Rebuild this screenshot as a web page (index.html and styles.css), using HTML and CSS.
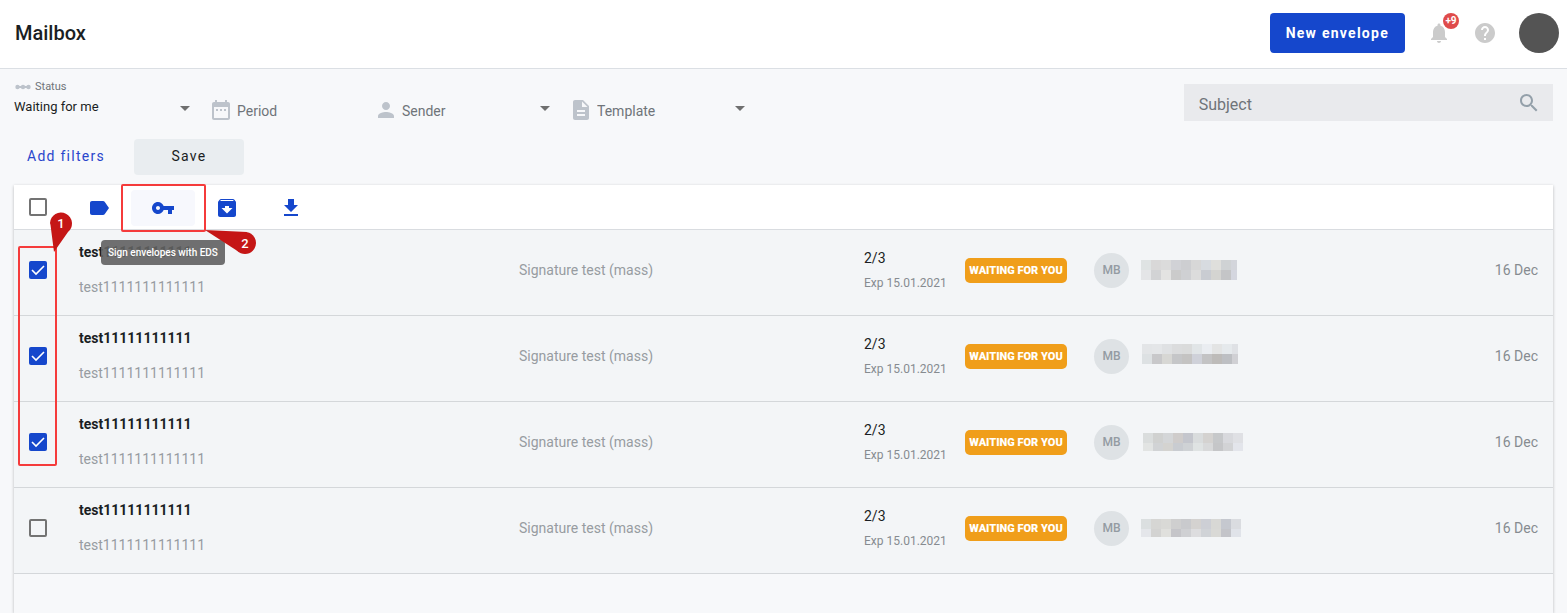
FILE: index.html
```html
<!DOCTYPE html>
<html lang="en">
<head>
<meta charset="utf-8">
<meta name="viewport" content="width=device-width, initial-scale=1">
<title>Mailbox</title>
<link rel="stylesheet" href="styles.css">
</head>
<body>
<header class="topbar">
  <h1 class="topbar-title">Mailbox</h1>
  <button class="btn btn-primary" type="button">New envelope</button>
  <button class="icon-btn" type="button" aria-label="Notifications">
    <svg class="icon" viewBox="0 0 24 24"><path d="M12 22c1.100 0 2-.9 2-2h-4c0 1.100.9 2 2 2zm6-6v-5c0-3.070-1.640-5.640-4.500-6.320V4c0-.83-.67-1.500-1.500-1.500s-1.500.67-1.500 1.500v.68C7.630 5.360 6 7.920 6 11v5l-2 2v1h16v-1l-2-2z"/></svg>
    <span class="count">+9</span>
  </button>
  <button class="icon-btn" type="button" aria-label="Help">
    <svg class="icon" viewBox="0 0 24 24"><path d="M12 2C6.480 2 2 6.480 2 12s4.480 10 10 10 10-4.480 10-10S17.520 2 12 2zm1 17h-2v-2h2v2zm2.070-7.750l-.9.920C13.450 12.900 13 13.500 13 15h-2v-.5c0-1.100.45-2.100 1.170-2.830l1.240-1.260c.37-.36.59-.86.59-1.410 0-1.100-.9-2-2-2s-2 .9-2 2H8c0-2.210 1.790-4 4-4s4 1.790 4 4c0 .88-.36 1.680-.93 2.250z"/></svg>
  </button>
  <button class="user" type="button" aria-label="Account"></button>
</header>

<main class="page">
  <form class="filters">
    <div class="field field-status">
      <label class="field-label" for="status">
        <svg class="steps" viewBox="0 0 16 6"><path d="M2 3h12" stroke="currentColor" stroke-width="2"/><circle cx="2.500" cy="3" r="2.200"/><circle cx="8" cy="3" r="2.200"/><circle cx="13.500" cy="3" r="2.200"/></svg>
        Status
      </label>
      <select class="control control-small" id="status"><option>Waiting for me</option></select>
      <svg class="caret" viewBox="0 0 24 24"><path d="M7 10l5 5 5-5z"/></svg>
    </div>
    <div class="field field-period">
      <svg class="icon" viewBox="0 0 24 24"><path d="M9 11H7v2h2v-2zm4 0h-2v2h2v-2zm4 0h-2v2h2v-2zm2-7h-1V2h-2v2H8V2H6v2H5c-1.110 0-1.990.9-1.990 2L3 20c0 1.100.89 2 2 2h14c1.100 0 2-.9 2-2V6c0-1.100-.9-2-2-2zm0 16H5V9h14v11z"/></svg>
      <input class="control" type="text" placeholder="Period" aria-label="Period">
    </div>
    <div class="field">
      <svg class="icon" viewBox="0 0 24 24"><path d="M12 12c2.210 0 4-1.790 4-4s-1.790-4-4-4-4 1.790-4 4 1.790 4 4 4zm0 2c-2.670 0-8 1.340-8 4v2h16v-2c0-2.660-5.330-4-8-4z"/></svg>
      <select class="control" aria-label="Sender"><option>Sender</option></select>
      <svg class="caret" viewBox="0 0 24 24"><path d="M7 10l5 5 5-5z"/></svg>
    </div>
    <div class="field">
      <svg class="icon" viewBox="0 0 24 24"><path d="M14 2H6c-1.100 0-1.990.9-1.990 2L4 20c0 1.100.89 2 1.990 2H18c1.100 0 2-.9 2-2V8l-6-6zm2 16H8v-2h8v2zm0-4H8v-2h8v2zm-3-5V3.500L18.500 9H13z"/></svg>
      <select class="control" aria-label="Template"><option>Template</option></select>
      <svg class="caret" viewBox="0 0 24 24"><path d="M7 10l5 5 5-5z"/></svg>
    </div>
    <div class="search">
      <input class="search-input" type="text" placeholder="Subject" aria-label="Subject">
      <svg class="icon" viewBox="0 0 24 24"><path d="M15.500 14h-.79l-.28-.27C15.410 12.590 16 11.110 16 9.500 16 5.910 13.090 3 9.500 3S3 5.910 3 9.500 5.910 16 9.500 16c1.610 0 3.090-.59 4.230-1.570l.27.28v.79l5 4.990L20.490 19l-4.990-5zm-6 0C7.010 14 5 11.990 5 9.500S7.010 5 9.500 5 14 7.010 14 9.500 11.990 14 9.500 14z"/></svg>
    </div>
  </form>

  <div class="filter-actions">
    <button class="btn btn-text" type="button">Add filters</button>
    <button class="btn btn-muted" type="button">Save</button>
  </div>

  <section class="card">
    <div class="toolbar">
      <input class="check" type="checkbox" aria-label="Select all">
      <div class="tools">
        <button class="tool" type="button" aria-label="Label"><svg class="icon" viewBox="0 0 24 24"><path d="M17.630 5.840C17.270 5.330 16.670 5 16 5L5 5.010C3.900 5.010 3 5.900 3 7v10c0 1.100.9 1.990 2 1.990L16 19c.67 0 1.270-.33 1.630-.84L22 12l-4.370-6.160z"/></svg></button>
        <button class="tool tool-active" type="button" aria-describedby="eds-tip" aria-label="Sign"><svg class="icon" viewBox="0 0 24 24"><path d="M12.650 10C11.830 7.670 9.610 6 7 6c-3.310 0-6 2.690-6 6s2.690 6 6 6c2.610 0 4.830-1.670 5.650-4H17v4h4v-4h2v-4H12.650zM7 14c-1.100 0-2-.9-2-2s.9-2 2-2 2 .9 2 2-.9 2-2 2z"/></svg></button>
        <button class="tool" type="button" aria-label="Archive"><svg class="icon" viewBox="0 0 24 24"><path d="M20.540 5.230l-1.390-1.680C18.880 3.210 18.470 3 18 3H6c-.47 0-.88.21-1.160.55L3.460 5.230C3.170 5.570 3 6.020 3 6.500V19c0 1.100.9 2 2 2h14c1.100 0 2-.9 2-2V6.500c0-.48-.17-.93-.46-1.270zM12 17.500L6.500 12H10v-2h4v2h3.500L12 17.500zM5.120 5l.81-1h12l.94 1H5.120z"/></svg></button>
        <button class="tool" type="button" aria-label="Download"><svg class="icon" viewBox="0 0 24 24"><path d="M19 9h-4V3H9v6H5l7 7 7-7zM5 18v2h14v-2H5z"/></svg></button>
      </div>
    </div>

    <table class="mail">
      <colgroup><col class="c-check"><col class="c-title"><col><col class="c-progress"><col class="c-state"><col class="c-sender"><col class="c-date"></colgroup>
      <tbody>
        <tr>
          <td class="cell-check"><input class="check" type="checkbox" checked aria-label="Select envelope 1"></td>
          <td><div class="title">test11111111111</div><div class="subtitle">test1111111111111</div></td>
          <td class="template">Signature test (mass)</td>
          <td><div class="progress">2/3</div><div class="expires">Exp 15.01.2021</div></td>
          <td><span class="state">WAITING FOR YOU</span></td>
          <td><div class="sender"><span class="initials">MB</span>
            <svg class="redacted" viewBox="0 0 102 24" shape-rendering="crispEdges"><path fill="#dfe3e3" d="M0 2h10v10H0z"/><path fill="#d9d8d8" d="M10 2h10v10H10z"/><path fill="#dbdbdb" d="M20 2h10v10H20z"/><path fill="#d1d2d6" d="M30 2h10v10H30z"/><path fill="#cdced1" d="M40 2h10v10H40z"/><path fill="#d7d7d7" d="M50 2h10v10H50z"/><path fill="#d7dbe0" d="M60 2h10v10H60z"/><path fill="#dfdfdc" d="M70 2h10v10H70z"/><path fill="#cfd2d4" d="M80 2h10v10H80z"/><path fill="#d3d5db" d="M90 2h6v10H90z"/><path fill="#e4e5e7" d="M0 12h10v10H0z"/><path fill="#d2d3d5" d="M10 12h10v10H10z"/><path fill="#e3e3e2" d="M20 12h10v10H20z"/><path fill="#cbcbcb" d="M30 12h10v10H30z"/><path fill="#cfd0d3" d="M40 12h10v10H40z"/><path fill="#dcdcdc" d="M50 12h10v10H50z"/><path fill="#c9ccd2" d="M60 12h10v10H60z"/><path fill="#d4d4d1" d="M70 12h10v10H70z"/><path fill="#c4c5c7" d="M80 12h10v10H80z"/><path fill="#d4d6df" d="M90 12h6v10H90z"/></svg></div></td>
          <td class="date">16 Dec</td>
        </tr>
        <tr>
          <td class="cell-check"><input class="check" type="checkbox" checked aria-label="Select envelope 2"></td>
          <td><div class="title">test11111111111</div><div class="subtitle">test1111111111111</div></td>
          <td class="template">Signature test (mass)</td>
          <td><div class="progress">2/3</div><div class="expires">Exp 15.01.2021</div></td>
          <td><span class="state">WAITING FOR YOU</span></td>
          <td><div class="sender"><span class="initials">MB</span>
            <svg class="redacted" viewBox="0 0 102 24" shape-rendering="crispEdges"><path fill="#e3e5e7" d="M1 0h10v10H1z"/><path fill="#e4e6e8" d="M11 0h10v10H11z"/><path fill="#dfe1e3" d="M21 0h10v10H21z"/><path fill="#dbdcdd" d="M31 0h10v10H31z"/><path fill="#dadbdb" d="M41 0h10v10H41z"/><path fill="#e1e5e7" d="M51 0h10v10H51z"/><path fill="#eaedf1" d="M61 0h10v10H61z"/><path fill="#e3e4e4" d="M71 0h10v10H71z"/><path fill="#e5e9ec" d="M81 0h10v10H81z"/><path fill="#dfe1e5" d="M91 0h6v10H91z"/><path fill="#dde1e3" d="M1 10h10v10H1z"/><path fill="#c8c8ca" d="M11 10h10v10H11z"/><path fill="#d7d7d4" d="M21 10h10v10H21z"/><path fill="#c5c6c8" d="M31 10h10v10H31z"/><path fill="#c4c3c2" d="M41 10h10v10H41z"/><path fill="#cfd1d9" d="M51 10h10v10H51z"/><path fill="#c3c3c4" d="M61 10h10v10H61z"/><path fill="#bdbbb9" d="M71 10h10v10H71z"/><path fill="#bdbfc3" d="M81 10h10v10H81z"/><path fill="#d0d0d4" d="M91 10h6v10H91z"/></svg></div></td>
          <td class="date">16 Dec</td>
        </tr>
        <tr>
          <td class="cell-check"><input class="check" type="checkbox" checked aria-label="Select envelope 3"></td>
          <td><div class="title">test11111111111</div><div class="subtitle">test1111111111111</div></td>
          <td class="template">Signature test (mass)</td>
          <td><div class="progress">2/3</div><div class="expires">Exp 15.01.2021</div></td>
          <td><span class="state">WAITING FOR YOU</span></td>
          <td><div class="sender"><span class="initials">MB</span>
            <svg class="redacted" viewBox="0 0 102 24" shape-rendering="crispEdges"><path fill="#dadddd" d="M2 3h10v10H2z"/><path fill="#d0d1d0" d="M12 3h10v10H12z"/><path fill="#d4d6d8" d="M22 3h10v10H22z"/><path fill="#cfcccb" d="M32 3h10v10H32z"/><path fill="#c4c6cd" d="M42 3h10v10H42z"/><path fill="#d9dcdd" d="M52 3h10v10H52z"/><path fill="#d4d2d0" d="M62 3h10v10H62z"/><path fill="#c6c8ca" d="M72 3h10v10H72z"/><path fill="#d8d9dd" d="M82 3h10v10H82z"/><path fill="#dfe0e4" d="M92 3h10v10H92z"/><path fill="#e2e4e3" d="M2 13h10v8H2z"/><path fill="#d1d3d5" d="M12 13h10v8H12z"/><path fill="#d4d3d0" d="M22 13h10v8H22z"/><path fill="#c9ccd1" d="M32 13h10v8H32z"/><path fill="#cfd2d5" d="M42 13h10v8H42z"/><path fill="#dfe3e3" d="M52 13h10v8H52z"/><path fill="#d8d9da" d="M62 13h10v8H62z"/><path fill="#c5c6c8" d="M72 13h10v8H72z"/><path fill="#d2d3d5" d="M82 13h10v8H82z"/><path fill="#e3e5eb" d="M92 13h10v8H92z"/></svg></div></td>
          <td class="date">16 Dec</td>
        </tr>
        <tr>
          <td class="cell-check"><input class="check" type="checkbox" aria-label="Select envelope 4"></td>
          <td><div class="title">test11111111111</div><div class="subtitle">test1111111111111</div></td>
          <td class="template">Signature test (mass)</td>
          <td><div class="progress">2/3</div><div class="expires">Exp 15.01.2021</div></td>
          <td><span class="state">WAITING FOR YOU</span></td>
          <td><div class="sender"><span class="initials">MB</span>
            <svg class="redacted" viewBox="0 0 102 24" shape-rendering="crispEdges"><path fill="#dbdfe0" d="M0 3h10v10H0z"/><path fill="#d6d6d4" d="M10 3h10v10H10z"/><path fill="#d9d9d6" d="M20 3h10v10H20z"/><path fill="#cfcfcf" d="M30 3h10v10H30z"/><path fill="#c9cacd" d="M40 3h10v10H40z"/><path fill="#d4d2d0" d="M50 3h10v10H50z"/><path fill="#cdcfd5" d="M60 3h10v10H60z"/><path fill="#d8d8d5" d="M70 3h10v10H70z"/><path fill="#c5c8cf" d="M80 3h10v10H80z"/><path fill="#dadce0" d="M90 3h10v10H90z"/><path fill="#e4e6ea" d="M0 13h10v8H0z"/><path fill="#d3d3d2" d="M10 13h10v8H10z"/><path fill="#e0e0dd" d="M20 13h10v8H20z"/><path fill="#c5c5c9" d="M30 13h10v8H30z"/><path fill="#cfd0d3" d="M40 13h10v8H40z"/><path fill="#dddddf" d="M50 13h10v8H50z"/><path fill="#d0d3d7" d="M60 13h10v8H60z"/><path fill="#d9d9d6" d="M70 13h10v8H70z"/><path fill="#c3c4c9" d="M80 13h10v8H80z"/><path fill="#e0e3e9" d="M90 13h10v8H90z"/></svg></div></td>
          <td class="date">16 Dec</td>
        </tr>
      </tbody>
    </table>

    <div class="tooltip" id="eds-tip" role="tooltip">Sign envelopes with EDS</div>
    <div class="mark mark-rows"></div>
    <div class="mark mark-sign"></div>
    <svg class="pin pin-one" viewBox="0 0 24 42"><path d="M1 12a11 11 0 1 1 18 9L5 41 1.500 14z"/><text x="12" y="17">1</text></svg>
    <svg class="pin pin-two" viewBox="0 0 54 28"><path d="M1 2l42 2-8 20z"/><circle cx="41" cy="15" r="11"/><text x="41" y="20">2</text></svg>
  </section>
</main>
</body>
</html>
```
FILE: styles.css
```css
* { box-sizing: border-box; }

body {
  margin: 0;
  min-height: 100vh;
  display: flex;
  flex-direction: column;
  background: #f7f8fa;
  color: #1a1e23;
  font: 14px/20px Roboto, "Liberation Sans", sans-serif;
}

button, input, select { font: inherit; color: inherit; margin: 0; }
button { border: 0; padding: 0; background: none; cursor: pointer; }
svg { display: block; fill: currentColor; }
.icon { width: 24px; height: 24px; flex: none; }

/* Header */
.topbar {
  display: flex;
  align-items: center;
  gap: 22px;
  padding: 13px 8px 15px 15px;
  background: #fff;
  border-bottom: 1px solid #dbdfe4;
}
.topbar-title {
  flex: 1;
  margin: 0;
  font-size: 20px;
  line-height: 24px;
  font-weight: 500;
}
.btn {
  height: 36px;
  border-radius: 4px;
  letter-spacing: .09em;
}
.btn-primary {
  height: 40px;
  padding: 0 16px;
  background: #1547cc;
  color: #fff;
  font-weight: 700;
}
.icon-btn { position: relative; color: #cbcbcb; }
.count {
  position: absolute;
  top: -8px;
  right: -8px;
  width: 16px;
  height: 16px;
  border-radius: 50%;
  background: #df4b4b;
  color: #fff;
  font-size: 10px;
  line-height: 16px;
  font-weight: 700;
}
.user {
  width: 40px;
  height: 40px;
  border-radius: 50%;
  background: #545454;
}

/* Filters */
.page {
  flex: 1;
  display: flex;
  flex-direction: column;
  padding: 10px 14px 0;
}
.filters {
  display: flex;
  align-items: flex-start;
  gap: 12px;
}
.field {
  position: relative;
  display: flex;
  align-items: center;
  gap: 4px;
  width: 183px;
  padding-top: 19px;
  color: #bdc3cb;
}
.field-period { width: 153px; }
.field-status {
  flex-direction: column;
  align-items: stretch;
  gap: 3px;
  padding-top: 0;
}
.field-label {
  display: flex;
  align-items: center;
  gap: 4px;
  color: #6f7479;
  font-size: 11px;
  line-height: 15px;
}
.steps { width: 16px; height: 6px; margin-left: 1px; color: #bdc3cb; }
.control {
  flex: 1;
  min-width: 0;
  height: 20px;
  padding: 0;
  margin-top: 2px;
  border: 0;
  outline: 0;
  appearance: none;
  background: none;
  color: #6f7479;
}
.control-small { flex: none; margin-top: 0; font-size: 13px; color: #1a1e23; }
.control::placeholder, .search-input::placeholder { color: #6f7479; opacity: 1; }
.caret {
  position: absolute;
  right: 0;
  top: 17px;
  width: 24px;
  height: 24px;
  color: #6f6f6f;
  pointer-events: none;
}
.search {
  display: flex;
  align-items: center;
  width: 24%;
  margin: 5px 0 0 auto;
  padding: 0 12px 0 15px;
  background: #e9eaed;
  color: #94a0aa;
}
.search-input {
  flex: 1;
  min-width: 0;
  height: 37px;
  padding: 3px 0 0;
  border: 0;
  outline: 0;
  background: none;
  font-size: 16px;
  color: #1a1e23;
}
.filter-actions {
  display: flex;
  gap: 16px;
  margin: 17px 0 10px;
}
.btn-text { padding: 0 13px 2px; color: #2a46cc; }
.btn-muted { width: 110px; padding-bottom: 2px; background: #e9edf0; }

/* Envelope list */
.card {
  position: relative;
  flex: 1;
  box-shadow: 0 1px 3px rgba(0, 0, 0, .25);
}
.toolbar {
  display: flex;
  align-items: center;
  gap: 20px;
  height: 45px;
  padding-left: 15px;
  background: #fff;
  border-bottom: 1px solid #d9dce0;
}
.tools { display: flex; padding-top: 1px; }
.tool {
  display: grid;
  place-items: center;
  width: 64px;
  height: 36px;
  border-radius: 4px;
  color: #1547cc;
}
.tool-active { background: #f7f8fd; }
.check {
  display: block;
  flex: none;
  width: 18px;
  height: 18px;
  border: 2px solid #737373;
  border-radius: 2px;
  appearance: none;
}
.check:checked {
  border: 0;
  background: #1547cc url("data:image/svg+xml,%3Csvg xmlns='http://www.w3.org/2000/svg' viewBox='0 0 18 18'%3E%3Cpath d='M3 9l4 4 8-8' fill='none' stroke='white' stroke-width='1.600'/%3E%3C/svg%3E");
}

.mail {
  width: 100%;
  table-layout: fixed;
  border-spacing: 0;
  background: #f3f5f7;
}
.c-check { width: 65px; }
.c-title { width: 440px; }
.c-progress { width: 101px; }
.c-state { width: 129px; }
.c-sender { width: 335px; }
.c-date { width: 124px; }
.mail td {
  height: 86px;
  padding: 0 0 5px;
  border-bottom: 1px solid #d4d7da;
  vertical-align: middle;
}
.mail .cell-check { padding-left: 15px; }
.title { font-weight: 700; margin-bottom: 15px; }
.subtitle { margin-bottom: 2px; }
.subtitle, .template { color: #979ca1; }
.progress { margin-bottom: 5px; }
.expires { font-size: 12px; color: #868b90; }
.state {
  display: block;
  width: 102px;
  border-radius: 5px;
  background: #f09e1a;
  color: #fff;
  font-size: 11px;
  line-height: 25px;
  font-weight: 900;
  text-align: center;
}
.sender { display: flex; align-items: center; gap: 12px; }
.initials {
  width: 35px;
  border-radius: 50%;
  background: #dee2e5;
  color: #939ba2;
  font-size: 12px;
  line-height: 35px;
  font-weight: 500;
  text-align: center;
}
.redacted { width: 102px; height: 24px; }
.mail .date { padding-right: 15px; color: #868b90; text-align: right; }

/* Overlays */
.tooltip {
  position: absolute;
  left: 87px;
  top: 55px;
  padding: 0 7px;
  border-radius: 4px;
  background: rgba(97, 97, 97, .9);
  color: #fff;
  font-size: 10px;
  line-height: 25px;
  font-weight: 500;
  white-space: nowrap;
}
.mark {
  position: absolute;
  border: 2px solid #f53b3b;
  border-radius: 2px;
  pointer-events: none;
}
.mark-rows { left: 4px; top: 61px; width: 39px; height: 220px; }
.mark-sign { left: 107px; top: -1px; width: 85px; height: 48px; }
.pin { position: absolute; color: #c51616; }
.pin text { fill: #fff; font-size: 13px; font-weight: 500; text-anchor: middle; }
.pin-one { left: 35px; top: 26px; width: 24px; height: 42px; }
.pin-two { left: 190px; top: 43px; width: 54px; height: 28px; }
```
